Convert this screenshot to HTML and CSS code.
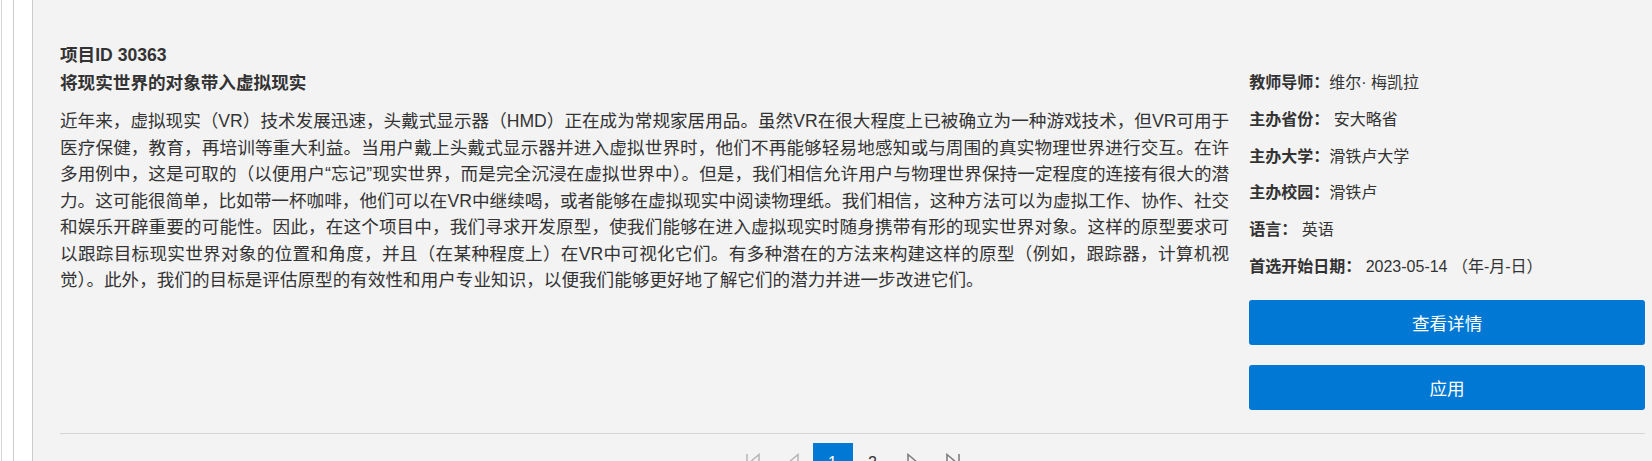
FILE: index.html
```html
<!DOCTYPE html>
<html lang="zh-CN">
<head>
<meta charset="utf-8">
<title>项目ID 30363</title>
<link rel="stylesheet" href="styles.css">
</head>
<body>
<div class="shell">
  <div class="shell-inner">
    <main class="panel">
      <h2 class="project-id">项目ID 30363</h2>
      <div class="project">
        <section class="project-main">
          <h3 class="project-title">将现实世界的对象带入虚拟现实</h3>
          <p class="project-desc">近年来，虚拟现实（VR）技术发展迅速，头戴式显示器（HMD）正在成为常规家居用品。虽然VR在很大程度上已被确立为一种游戏技术，但VR可用于医疗保健，教育，再培训等重大利益。当用户戴上头戴式显示器并进入虚拟世界时，他们不再能够轻易地感知或与周围的真实物理世界进行交互。在许多用例中，这是可取的（以便用户“忘记”现实世界，而是完全沉浸在虚拟世界中）。但是，我们相信允许用户与物理世界保持一定程度的连接有很大的潜力。这可能很简单，比如带一杯咖啡，他们可以在VR中继续喝，或者能够在虚拟现实中阅读物理纸。我们相信，这种方法可以为虚拟工作、协作、社交和娱乐开辟重要的可能性。因此，在这个项目中，我们寻求开发原型，使我们能够在进入虚拟现实时随身携带有形的现实世界对象。这样的原型要求可以跟踪目标现实世界对象的位置和角度，并且（在某种程度上）在VR中可视化它们。有多种潜在的方法来构建这样的原型（例如，跟踪器，计算机视觉）。此外，我们的目标是评估原型的有效性和用户专业知识，以便我们能够更好地了解它们的潜力并进一步改进它们。</p>
        </section>
        <aside class="project-side">
          <ul class="facts">
            <li><span class="label">教师导师：</span>维尔· 梅凯拉</li>
            <li><span class="label">主办省份：</span> 安大略省</li>
            <li><span class="label">主办大学：</span>滑铁卢大学</li>
            <li><span class="label">主办校园：</span>滑铁卢</li>
            <li><span class="label">语言：</span> 英语</li>
            <li><span class="label">首选开始日期：</span> 2023-05-14 （年-月-日）</li>
          </ul>
          <div class="actions">
            <a class="btn" href="#">查看详情</a>
            <a class="btn" href="#">应用</a>
          </div>
        </aside>
      </div>
      <hr class="divider">
      <nav class="pager">
        <span class="pg pg-disabled"><svg width="16" height="20" viewBox="0 0 16 20"><path d="M2 1v18M14 1.5 4 10l10 8.5z"/></svg></span>
        <span class="pg pg-disabled"><svg width="16" height="20" viewBox="0 0 16 20"><path d="M13 1.5 3 10l10 8.5z"/></svg></span>
        <span class="pg pg-active">1</span>
        <span class="pg">2</span>
        <span class="pg pg-icon"><svg width="16" height="20" viewBox="0 0 16 20"><path d="M3 1.5 13 10 3 18.5z"/></svg></span>
        <span class="pg pg-icon"><svg width="16" height="20" viewBox="0 0 16 20"><path d="M2 1.5 12 10 2 18.5zM14 1v18"/></svg></span>
      </nav>
    </main>
  </div>
</div>
</body>
</html>
```

FILE: styles.css
```css
html, body {
  margin: 0;
  padding: 0;
  background: #ffffff;
  overflow: hidden;
}

body {
  font-family: "Liberation Sans", "Noto Sans CJK SC", sans-serif;
  color: #333333;
}

.shell {
  margin-left: 1px;
  border-left: 1px solid #d6d6d6;
  padding-left: 11px;
  min-height: 100vh;
}

.shell-inner {
  border-left: 1px solid #cfcfcf;
  padding-left: 18px;
  min-height: 100vh;
}

.panel {
  display: block;
  border-left: 1px solid #cccccc;
  background: #f3f3f3;
  padding: 42px 7px 0 27px;
  min-height: 100vh;
}

.project-id {
  margin: 0 0 2px;
  font-size: 17.6px;
  line-height: 26px;
  font-weight: bold;
}

.project {
  display: grid;
  grid-template-columns: minmax(0, 1fr) 395.8px;
  column-gap: 20px;
  align-items: start;
}

.project-title {
  margin: 0;
  font-size: 17.6px;
  line-height: 26px;
  font-weight: bold;
}

.project-desc {
  margin: 12px 0 0;
  font-size: 17.6px;
  line-height: 26.5px;
  text-align: justify;
}

.project-side {
  padding-top: 1px;
}

.facts {
  list-style: none;
  margin: 0;
  padding: 0;
  font-size: 16px;
  line-height: 24px;
}

.facts li {
  margin-bottom: 12.8px;
  white-space: nowrap;
}

.facts li:last-child {
  margin-bottom: 0;
}

.label {
  font-weight: bold;
}

.actions {
  display: flex;
  flex-direction: column;
  gap: 20px;
  margin-top: 21px;
}

.btn {
  display: flex;
  align-items: center;
  justify-content: center;
  height: 45px;
  border-radius: 3px;
  background: #0078d4;
  color: #ffffff;
  font-size: 17.6px;
  text-decoration: none;
}

.divider {
  margin: 23px 0 0;
  border: 0;
  border-top: 1px solid #d5d5d5;
  height: 0;
}

.pager {
  display: flex;
  justify-content: center;
  margin-top: 9px;
}

.pg {
  display: flex;
  align-items: center;
  justify-content: center;
  width: 40px;
  height: 40px;
  font-size: 16px;
  color: #333333;
}

.pg svg {
  fill: none;
  stroke: currentColor;
  stroke-width: 1.5;
}

.pg-disabled {
  color: #b5b5b5;
}

.pg-icon {
  color: #7a7a7a;
}

.pg-active {
  background: #0078d4;
  color: #ffffff;
}
```
